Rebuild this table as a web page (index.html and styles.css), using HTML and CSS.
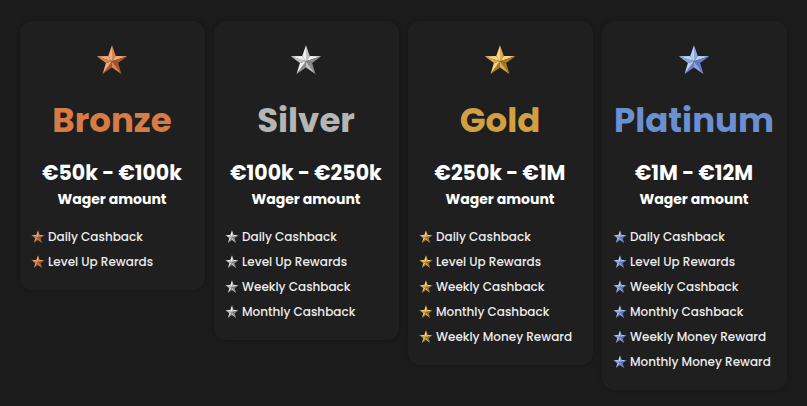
FILE: index.html
```html
<!DOCTYPE html>
<html lang="en">
<head>
<meta charset="utf-8">
<title>VIP Tiers</title>
<link rel="stylesheet" href="styles.css">
</head>
<body>
<svg class="defs" width="0" height="0" aria-hidden="true">
  <symbol id="star" viewBox="-50 -50 100 96">
    <polygon points="0,-50 -11.76,-16.18 0,0" fill="var(--hi)"/>
    <polygon points="0,-50 11.76,-16.18 0,0" fill="var(--mid)"/>
    <polygon points="47.55,-15.45 11.76,-16.18 0,0" fill="var(--hi)"/>
    <polygon points="47.55,-15.45 19.02,6.18 0,0" fill="var(--lo)"/>
    <polygon points="29.39,40.45 19.02,6.18 0,0" fill="var(--lo)"/>
    <polygon points="29.39,40.45 0,20 0,0" fill="var(--mid)"/>
    <polygon points="-29.39,40.45 0,20 0,0" fill="var(--lo)"/>
    <polygon points="-29.39,40.45 -19.02,6.18 0,0" fill="var(--hi)"/>
    <polygon points="-47.55,-15.45 -19.02,6.18 0,0" fill="var(--mid)"/>
    <polygon points="-47.55,-15.45 -11.76,-16.18 0,0" fill="var(--hi)"/>
  </symbol>
</svg>
<main class="tiers">
  <section class="card bronze">
    <svg class="big-star"><use href="#star"/></svg>
    <h2 class="title">Bronze</h2>
    <div class="range">€50k - €100k</div>
    <div class="wager">Wager amount</div>
    <ul class="perks">
      <li><svg class="mini"><use href="#star"/></svg>Daily Cashback</li>
      <li><svg class="mini"><use href="#star"/></svg>Level Up Rewards</li>
    </ul>
  </section>
  <section class="card silver">
    <svg class="big-star"><use href="#star"/></svg>
    <h2 class="title">Silver</h2>
    <div class="range">€100k - €250k</div>
    <div class="wager">Wager amount</div>
    <ul class="perks">
      <li><svg class="mini"><use href="#star"/></svg>Daily Cashback</li>
      <li><svg class="mini"><use href="#star"/></svg>Level Up Rewards</li>
      <li><svg class="mini"><use href="#star"/></svg>Weekly Cashback</li>
      <li><svg class="mini"><use href="#star"/></svg>Monthly Cashback</li>
    </ul>
  </section>
  <section class="card gold">
    <svg class="big-star"><use href="#star"/></svg>
    <h2 class="title">Gold</h2>
    <div class="range">€250k - €1M</div>
    <div class="wager">Wager amount</div>
    <ul class="perks">
      <li><svg class="mini"><use href="#star"/></svg>Daily Cashback</li>
      <li><svg class="mini"><use href="#star"/></svg>Level Up Rewards</li>
      <li><svg class="mini"><use href="#star"/></svg>Weekly Cashback</li>
      <li><svg class="mini"><use href="#star"/></svg>Monthly Cashback</li>
      <li><svg class="mini"><use href="#star"/></svg>Weekly Money Reward</li>
    </ul>
  </section>
  <section class="card platinum">
    <svg class="big-star"><use href="#star"/></svg>
    <h2 class="title">Platinum</h2>
    <div class="range">€1M - €12M</div>
    <div class="wager">Wager amount</div>
    <ul class="perks">
      <li><svg class="mini"><use href="#star"/></svg>Daily Cashback</li>
      <li><svg class="mini"><use href="#star"/></svg>Level Up Rewards</li>
      <li><svg class="mini"><use href="#star"/></svg>Weekly Cashback</li>
      <li><svg class="mini"><use href="#star"/></svg>Monthly Cashback</li>
      <li><svg class="mini"><use href="#star"/></svg>Weekly Money Reward</li>
      <li><svg class="mini"><use href="#star"/></svg>Monthly Money Reward</li>
    </ul>
  </section>
</main>
</body>
</html>
```
FILE: styles.css
```css
* { box-sizing: border-box; }
html, body { margin: 0; padding: 0; }
body {
  background: #1b1b1b;
  font-family: "Poppins", "Inter", "DejaVu Sans", sans-serif;
  color: #f2f2f2;
  width: 807px;
  height: 406px;
  overflow: hidden;
}
.defs { position: absolute; width: 0; height: 0; }
.tiers {
  display: flex;
  align-items: flex-start;
  gap: 9px;
  padding: 21px 0 0 20px;
}
.card {
  width: 185px;
  background: #1f1f1f;
  border-radius: 12px;
  padding: 24px 12px 16px 11px;
  display: flex;
  flex-direction: column;
  align-items: center;
  box-shadow: 0 0 4px rgba(0,0,0,0.25);
}
.big-star { width: 32px; height: 31px; display: block; }
.title {
  margin: 24px 0 0 0;
  font-size: 34px;
  line-height: 40px;
  font-weight: 700;
  white-space: nowrap;
}
.range {
  margin-top: 20px;
  font-size: 20.5px;
  line-height: 26px;
  font-weight: 700;
  color: #ffffff;
  white-space: nowrap;
}
.wager {
  margin-top: 3px;
  font-size: 14px;
  line-height: 20px;
  font-weight: 700;
  color: #ffffff;
}
.perks {
  list-style: none;
  margin: 15px 0 0 0;
  padding: 0;
  align-self: stretch;
}
.perks li {
  display: flex;
  align-items: center;
  gap: 3px;
  height: 25px;
  font-size: 12px;
  font-weight: 500;
  color: #ececec;
  white-space: nowrap;
}
.mini { width: 14px; height: 14px; flex: none; }

.bronze { --hi: #f3ab7c; --mid: #dc8450; --lo: #a8572c; }
.bronze .title { color: #d97b45; }
.silver { --hi: #f0f0f0; --mid: #c2c2c2; --lo: #8c8c8c; }
.silver .title { color: #b5b5b5; }
.gold { --hi: #f8d57f; --mid: #deaa47; --lo: #a97a22; }
.gold .title { color: #d2a042; }
.platinum { --hi: #b6d2f5; --mid: #8ca7e6; --lo: #6b7ccd; }
.platinum .title { color: #6b8fd0; }
```
